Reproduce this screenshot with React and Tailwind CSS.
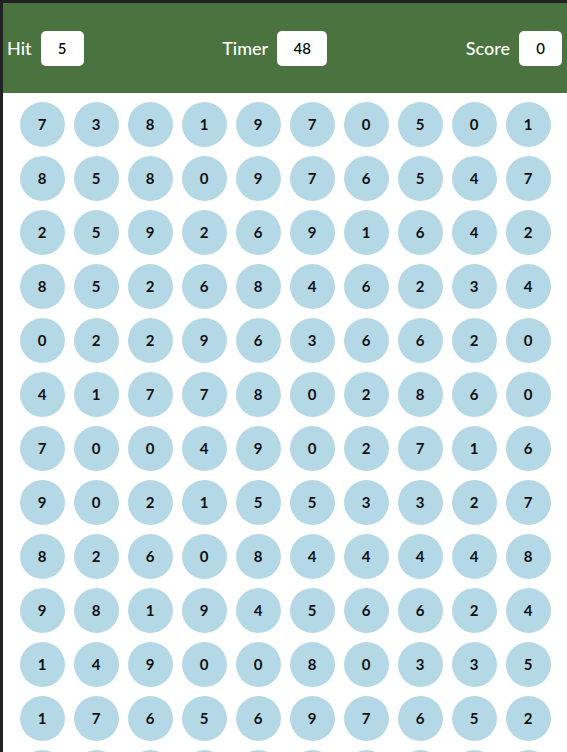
const ROWS = [
  '7381970501',
  '8580976547',
  '2592691642',
  '8526846234',
  '0229636620',
  '4177802860',
  '7004902716',
  '9021553327',
  '8260844448',
  '9819456624',
  '1490080335',
  '1765697652',
  '3418205796',
]

function Stat({ label, value, wide }) {
  return (
    <div className="flex items-center gap-[9px]">
      <span className="text-[18px] font-medium text-white">{label}</span>
      <span
        className={`flex h-[35px] items-center justify-center rounded-[5px] bg-white text-[15px] font-medium text-black ${
          wide ? 'w-[50px]' : 'w-[43px]'
        }`}
      >
        {value}
      </span>
    </div>
  )
}

export default function App() {
  return (
    <div
      className="h-[752px] overflow-hidden bg-[#222222] pl-[3px] pt-[3px]"
      style={{ fontFamily: 'Lato, "Open Sans", sans-serif' }}
    >
      <div className="h-full bg-white">
        <header className="flex h-[90px] items-center justify-between bg-[#4a7340] pl-[4px] pr-[5px]">
          <Stat label="Hit" value="5" />
          <Stat label="Timer" value="48" wide />
          <Stat label="Score" value="0" />
        </header>

        <div className="flex justify-center pt-[9px]">
          <div className="grid grid-cols-10 gap-[9px]">
            {ROWS.map((row, r) =>
              row.split('').map((d, c) => (
                <div
                  key={`${r}-${c}`}
                  className="flex h-[45px] w-[45px] items-center justify-center rounded-full bg-[#b5d8e6] text-[15px] font-bold text-[#111]"
                >
                  {d}
                </div>
              ))
            )}
          </div>
        </div>
      </div>
    </div>
  )
}
